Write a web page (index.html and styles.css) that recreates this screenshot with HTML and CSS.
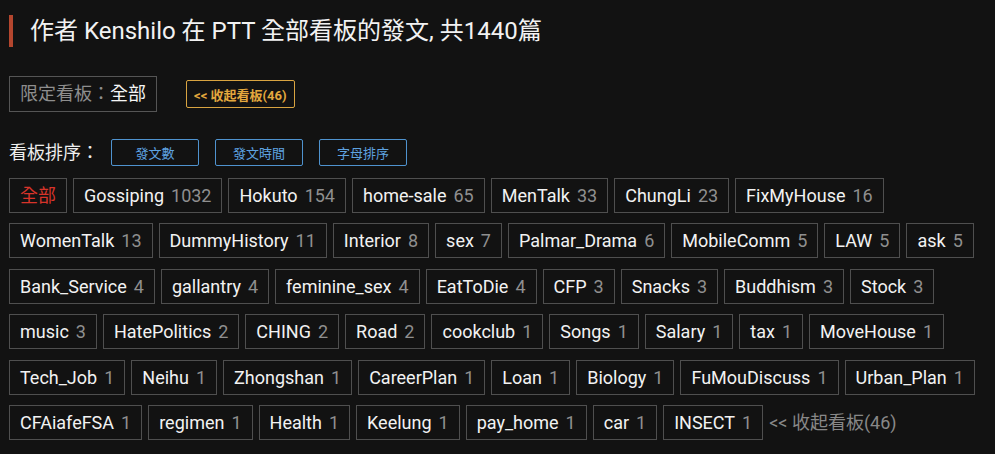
FILE: index.html
```html
<!DOCTYPE html>
<html lang="zh-Hant">
<head>
<meta charset="utf-8">
<title>Kenshilo</title>
<link rel="stylesheet" href="styles.css">
</head>
<body>
<h1 class="title">作者 Kenshilo 在 PTT 全部看板的發文, 共1440篇</h1>
<div class="filter-row">
  <div class="filter-box"><span class="muted">限定看板：</span>全部</div>
  <button class="btn-collapse">&lt;&lt; 收起看板(46)</button>
</div>
<div class="sort-row">
  <span class="sort-label">看板排序：</span>
  <button class="btn-sort">發文數</button>
  <button class="btn-sort">發文時間</button>
  <button class="btn-sort">字母排序</button>
</div>
<div class="tags">
  <span class="tag tag-active">全部</span>
  <span class="tag">Gossiping<span class="count">1032</span></span>
  <span class="tag">Hokuto<span class="count">154</span></span>
  <span class="tag">home-sale<span class="count">65</span></span>
  <span class="tag">MenTalk<span class="count">33</span></span>
  <span class="tag">ChungLi<span class="count">23</span></span>
  <span class="tag">FixMyHouse<span class="count">16</span></span>
  <span class="tag">WomenTalk<span class="count">13</span></span>
  <span class="tag">DummyHistory<span class="count">11</span></span>
  <span class="tag">Interior<span class="count">8</span></span>
  <span class="tag">sex<span class="count">7</span></span>
  <span class="tag">Palmar_Drama<span class="count">6</span></span>
  <span class="tag">MobileComm<span class="count">5</span></span>
  <span class="tag">LAW<span class="count">5</span></span>
  <span class="tag">ask<span class="count">5</span></span>
  <span class="tag">Bank_Service<span class="count">4</span></span>
  <span class="tag">gallantry<span class="count">4</span></span>
  <span class="tag">feminine_sex<span class="count">4</span></span>
  <span class="tag">EatToDie<span class="count">4</span></span>
  <span class="tag">CFP<span class="count">3</span></span>
  <span class="tag">Snacks<span class="count">3</span></span>
  <span class="tag">Buddhism<span class="count">3</span></span>
  <span class="tag">Stock<span class="count">3</span></span>
  <span class="tag">music<span class="count">3</span></span>
  <span class="tag">HatePolitics<span class="count">2</span></span>
  <span class="tag">CHING<span class="count">2</span></span>
  <span class="tag">Road<span class="count">2</span></span>
  <span class="tag">cookclub<span class="count">1</span></span>
  <span class="tag">Songs<span class="count">1</span></span>
  <span class="tag">Salary<span class="count">1</span></span>
  <span class="tag">tax<span class="count">1</span></span>
  <span class="tag">MoveHouse<span class="count">1</span></span>
  <span class="tag">Tech_Job<span class="count">1</span></span>
  <span class="tag">Neihu<span class="count">1</span></span>
  <span class="tag">Zhongshan<span class="count">1</span></span>
  <span class="tag">CareerPlan<span class="count">1</span></span>
  <span class="tag">Loan<span class="count">1</span></span>
  <span class="tag">Biology<span class="count">1</span></span>
  <span class="tag">FuMouDiscuss<span class="count">1</span></span>
  <span class="tag">Urban_Plan<span class="count">1</span></span>
  <span class="tag">CFAiafeFSA<span class="count">1</span></span>
  <span class="tag">regimen<span class="count">1</span></span>
  <span class="tag">Health<span class="count">1</span></span>
  <span class="tag">Keelung<span class="count">1</span></span>
  <span class="tag">pay_home<span class="count">1</span></span>
  <span class="tag">car<span class="count">1</span></span>
  <span class="tag">INSECT<span class="count">1</span></span>
  <span class="collapse-link">&lt;&lt; 收起看板(46)</span>
</div>
</body>
</html>
```
FILE: styles.css
```css
html, body {
  margin: 0;
  background: #121212;
}
body {
  padding: 15px 9px 0 9px;
  color: #ececec;
  font-family: Roboto, "Noto Sans CJK TC", sans-serif;
}
.title {
  margin: 0;
  border-left: 4px solid #b4462e;
  padding-left: 17px;
  font-size: 24px;
  font-weight: 400;
  line-height: 32px;
  color: #f2f2f2;
}
.filter-row {
  display: flex;
  align-items: center;
  margin-top: 29px;
}
.filter-box {
  border: 1px solid #555;
  padding: 0 10px;
  line-height: 34px;
  font-size: 18px;
  color: #f5f5f5;
}
.muted {
  color: #8e8e8e;
}
.btn-collapse {
  margin-left: 29px;
  height: 28px;
  padding: 0 7px;
  background: transparent;
  border: 1px solid #d9a441;
  border-radius: 2px;
  color: #e3a83e;
  font-family: Roboto, "Noto Sans CJK TC", sans-serif;
  font-size: 13px;
  font-weight: 700;
}
.sort-row {
  display: flex;
  align-items: center;
  margin-top: 27px;
}
.sort-label {
  font-size: 18px;
  line-height: 27px;
  color: #eeeeee;
  margin-right: 12px;
}
.btn-sort {
  width: 88px;
  height: 27px;
  margin-right: 16px;
  padding: 0;
  background: transparent;
  border: 1px solid #4f93cf;
  border-radius: 2px;
  color: #5ea2e0;
  font-family: Roboto, "Noto Sans CJK TC", sans-serif;
  font-size: 13px;
}
.tags {
  display: flex;
  flex-wrap: wrap;
  gap: 10.4px 6px;
  margin-top: 12px;
}
.tag {
  border: 1px solid #4f4f4f;
  padding: 0 10px;
  line-height: 33px;
  font-size: 18px;
  color: #f2f2f2;
  white-space: nowrap;
}
.tag-active {
  color: #d8342a;
}
.count {
  margin-left: 7px;
  color: #8f8f8f;
}
.collapse-link {
  line-height: 35px;
  font-size: 18px;
  color: #888;
}
```
